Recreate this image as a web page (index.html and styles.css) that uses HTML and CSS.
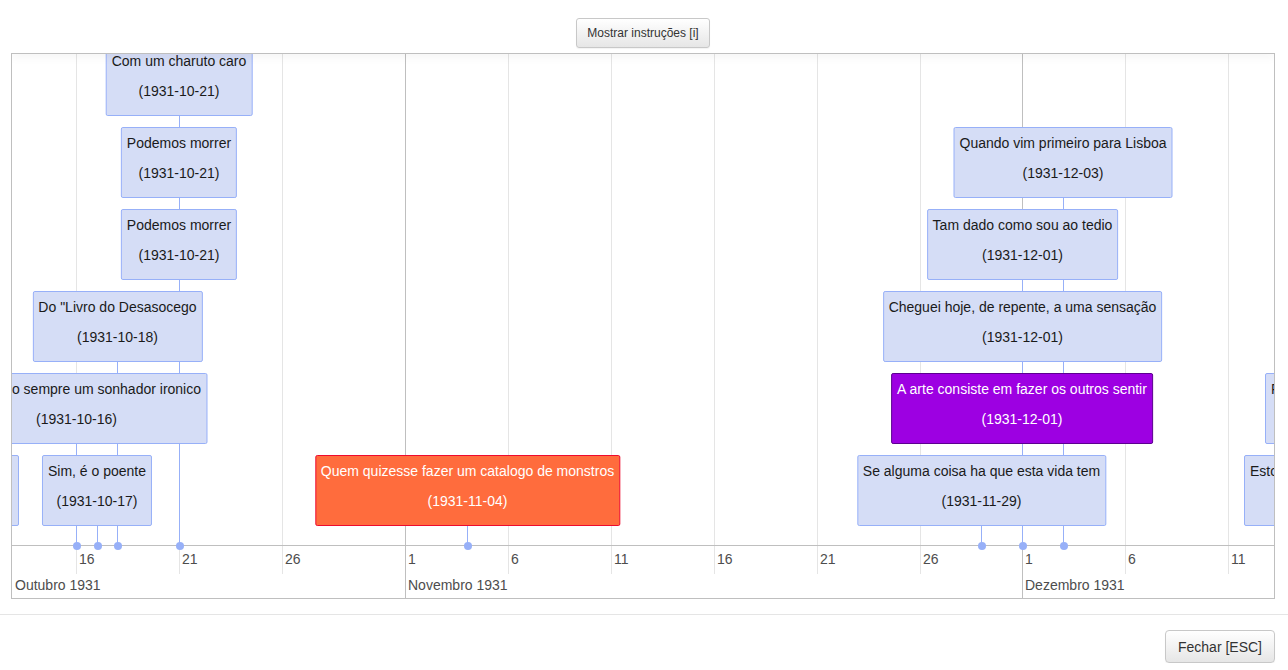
FILE: index.html
```html
<!DOCTYPE html>
<html lang="pt">
<head>
<meta charset="utf-8">
<title>Linha do tempo</title>
<link rel="stylesheet" href="styles.css">
</head>
<body>
<div class="top-bar">
  <button class="btn btn-small">Mostrar instruções [i]</button>
</div>

<div class="timeline">
  <div class="panel-center">
    <div class="grid minor" style="left:64px"></div>
    <div class="grid minor" style="left:167px"></div>
    <div class="grid minor" style="left:270px"></div>
    <div class="grid major" style="left:393px"></div>
    <div class="grid minor" style="left:496px"></div>
    <div class="grid minor" style="left:599px"></div>
    <div class="grid minor" style="left:702px"></div>
    <div class="grid minor" style="left:805px"></div>
    <div class="grid minor" style="left:908px"></div>
    <div class="grid major" style="left:1010px"></div>
    <div class="grid minor" style="left:1113px"></div>
    <div class="grid minor" style="left:1216px"></div>
  </div>
  <div class="panel-axis">
    <div class="grid minor short" style="left:64px"></div>
    <div class="grid minor short" style="left:167px"></div>
    <div class="grid minor short" style="left:270px"></div>
    <div class="grid major" style="left:393px"></div>
    <div class="grid minor short" style="left:496px"></div>
    <div class="grid minor short" style="left:599px"></div>
    <div class="grid minor short" style="left:702px"></div>
    <div class="grid minor short" style="left:805px"></div>
    <div class="grid minor short" style="left:908px"></div>
    <div class="grid major" style="left:1010px"></div>
    <div class="grid minor short" style="left:1113px"></div>
    <div class="grid minor short" style="left:1216px"></div>

    <span class="label-minor" style="left:65px">16</span>
    <span class="label-minor" style="left:168px">21</span>
    <span class="label-minor" style="left:271px">26</span>
    <span class="label-minor" style="left:394px">1</span>
    <span class="label-minor" style="left:497px">6</span>
    <span class="label-minor" style="left:600px">11</span>
    <span class="label-minor" style="left:703px">16</span>
    <span class="label-minor" style="left:806px">21</span>
    <span class="label-minor" style="left:909px">26</span>
    <span class="label-minor" style="left:1011px">1</span>
    <span class="label-minor" style="left:1114px">6</span>
    <span class="label-minor" style="left:1217px">11</span>

    <span class="label-major" style="left:1px">Outubro 1931</span>
    <span class="label-major" style="left:394px">Novembro 1931</span>
    <span class="label-major" style="left:1011px">Dezembro 1931</span>
  </div>

  <div class="items">
    <!-- connector lines -->
    <div class="line" style="left:64px;top:390px;height:101px"></div>
    <div class="line" style="left:85px;top:472px;height:19px"></div>
    <div class="line" style="left:105px;top:308px;height:183px"></div>
    <div class="line" style="left:167px;top:62px;height:429px"></div>
    <div class="line" style="left:455px;top:472px;height:19px"></div>
    <div class="line" style="left:969px;top:472px;height:19px"></div>
    <div class="line" style="left:1010px;top:226px;height:265px"></div>
    <div class="line" style="left:1051px;top:144px;height:347px"></div>

    <!-- row 1 -->
    <div class="item item-edge-left" style="top:401px">
      <div class="item-title">Arte de bem escrever</div>
      <div class="item-date">(1931-10-10)</div>
    </div>
    <div class="item" style="left:85px;top:401px">
      <div class="item-title">Sim, é o poente</div>
      <div class="item-date">(1931-10-17)</div>
    </div>
    <div class="item item-orange" style="left:455.5px;top:401px">
      <div class="item-title">Quem quizesse fazer um catalogo de monstros</div>
      <div class="item-date">(1931-11-04)</div>
    </div>
    <div class="item" style="left:969.5px;top:401px">
      <div class="item-title">Se alguma coisa ha que esta vida tem</div>
      <div class="item-date">(1931-11-29)</div>
    </div>
    <div class="item item-edge-right" style="left:1232px;top:401px">
      <div class="item-title">Estou hoje lucido de uma maneira estranha</div>
      <div class="item-date">(1931-12-20)</div>
    </div>

    <!-- row 2 -->
    <div class="item" style="left:64.5px;top:319px">
      <div class="item-title">Tenho sido sempre um sonhador ironico</div>
      <div class="item-date">(1931-10-16)</div>
    </div>
    <div class="item item-purple" style="left:1010px;top:319px">
      <div class="item-title">A arte consiste em fazer os outros sentir</div>
      <div class="item-date">(1931-12-01)</div>
    </div>
    <div class="item item-edge-right" style="left:1253px;top:319px">
      <div class="item-title">Fui genio mais que nos sonhos</div>
      <div class="item-date">(1931-12-18)</div>
    </div>

    <!-- row 3 -->
    <div class="item" style="left:105.5px;top:237px">
      <div class="item-title">Do "Livro do Desasocego</div>
      <div class="item-date">(1931-10-18)</div>
    </div>
    <div class="item" style="left:1010.5px;top:237px">
      <div class="item-title">Cheguei hoje, de repente, a uma sensação</div>
      <div class="item-date">(1931-12-01)</div>
    </div>

    <!-- row 4 -->
    <div class="item" style="left:167px;top:155px">
      <div class="item-title">Podemos morrer</div>
      <div class="item-date">(1931-10-21)</div>
    </div>
    <div class="item" style="left:1010.5px;top:155px">
      <div class="item-title">Tam dado como sou ao tedio</div>
      <div class="item-date">(1931-12-01)</div>
    </div>

    <!-- row 5 -->
    <div class="item" style="left:167px;top:73px">
      <div class="item-title">Podemos morrer</div>
      <div class="item-date">(1931-10-21)</div>
    </div>
    <div class="item" style="left:1051px;top:73px">
      <div class="item-title">Quando vim primeiro para Lisboa</div>
      <div class="item-date">(1931-12-03)</div>
    </div>

    <!-- row 6 -->
    <div class="item" style="left:167px;top:-9px">
      <div class="item-title">Com um charuto caro</div>
      <div class="item-date">(1931-10-21)</div>
    </div>

    <!-- dots on the axis -->
    <div class="dot" style="left:64.5px"></div>
    <div class="dot" style="left:85.5px"></div>
    <div class="dot" style="left:105.5px"></div>
    <div class="dot" style="left:167.5px"></div>
    <div class="dot" style="left:455.5px"></div>
    <div class="dot" style="left:969.5px"></div>
    <div class="dot" style="left:1010.5px"></div>
    <div class="dot" style="left:1051.5px"></div>
  </div>
  <div class="shadow-top"></div>
</div>

<div class="footer">
  <button class="btn btn-large">Fechar [ESC]</button>
</div>
</body>
</html>
```

FILE: styles.css
```css
* { box-sizing: border-box; }

html, body {
  margin: 0;
  padding: 0;
  background: #ffffff;
  font-family: "Liberation Sans", Arial, Helvetica, sans-serif;
  color: #1a1a1a;
}

.top-bar {
  display: flex;
  justify-content: center;
  padding-top: 18px;
}

.btn {
  font-family: "Liberation Sans", Arial, Helvetica, sans-serif;
  color: #333333;
  background: linear-gradient(#ffffff, #e6e6e6);
  border: 1px solid #c8c8c8;
  border-radius: 3px;
  box-shadow: 0 1px 1px rgba(0, 0, 0, 0.05);
  padding: 0;
  cursor: pointer;
}

.btn-small {
  font-size: 12px;
  width: 134px;
  height: 30px;
  margin-right: 2px;
}

.btn-large {
  font-size: 14px;
  width: 110px;
  height: 33px;
  border-radius: 4px;
}

.timeline {
  position: relative;
  overflow: hidden;
  margin: 5px 13px 0 11px;
  height: 546px;
  border: 1px solid #bfbfbf;
  display: flex;
  flex-direction: column;
}

.panel-center {
  position: relative;
  height: 491px;
  flex: none;
}

.panel-axis {
  position: relative;
  flex: 1;
  border-top: 1px solid #bfbfbf;
}

.grid {
  position: absolute;
  top: 0;
  bottom: 0;
  width: 1px;
}

.grid.minor { background: #e5e5e5; }
.grid.major { background: #bfbfbf; }
.grid.short { bottom: auto; height: 28px; }

.label-minor,
.label-major {
  position: absolute;
  font-size: 14px;
  line-height: 20px;
  color: #4d4d4d;
  padding-left: 2px;
  white-space: nowrap;
}

.label-minor { top: 3px; }
.label-major { top: 29px; }

.items {
  position: absolute;
  inset: 0;
}

.line {
  position: absolute;
  width: 1px;
  background: #97b0f8;
}

.item {
  position: absolute;
  transform: translateX(-50%);
  white-space: nowrap;
  background: #d5ddf6;
  border: 1px solid #97b0f8;
  border-radius: 2px;
  padding: 5px 5px 14px;
  font-size: 14px;
  line-height: 20px;
  color: #1a1a1a;
  text-align: center;
}

.item-date { margin-top: 10px; }

.item-orange {
  background: #ff6c3d;
  border-color: #ee0a2e;
  color: #ffffff;
}

.item-purple {
  background: #9d00e2;
  border-color: #5c0090;
  color: #ffffff;
}

.item-edge-left {
  transform: none;
  left: -151px;
  width: 158px;
  overflow: hidden;
}

.item-edge-right {
  transform: none;
}

.dot {
  position: absolute;
  top: 491.5px;
  width: 8px;
  height: 8px;
  border-radius: 50%;
  background: #97b0f8;
  transform: translate(-50%, -50%);
}

.shadow-top {
  position: absolute;
  top: -1px;
  left: 0;
  right: 0;
  height: 1px;
  box-shadow: 0 0 10px rgba(0, 0, 0, 0.35);
}

.footer {
  margin-top: 15px;
  border-top: 1px solid #e5e5e5;
  padding: 15px 13px 0 0;
  display: flex;
  justify-content: flex-end;
}
```
